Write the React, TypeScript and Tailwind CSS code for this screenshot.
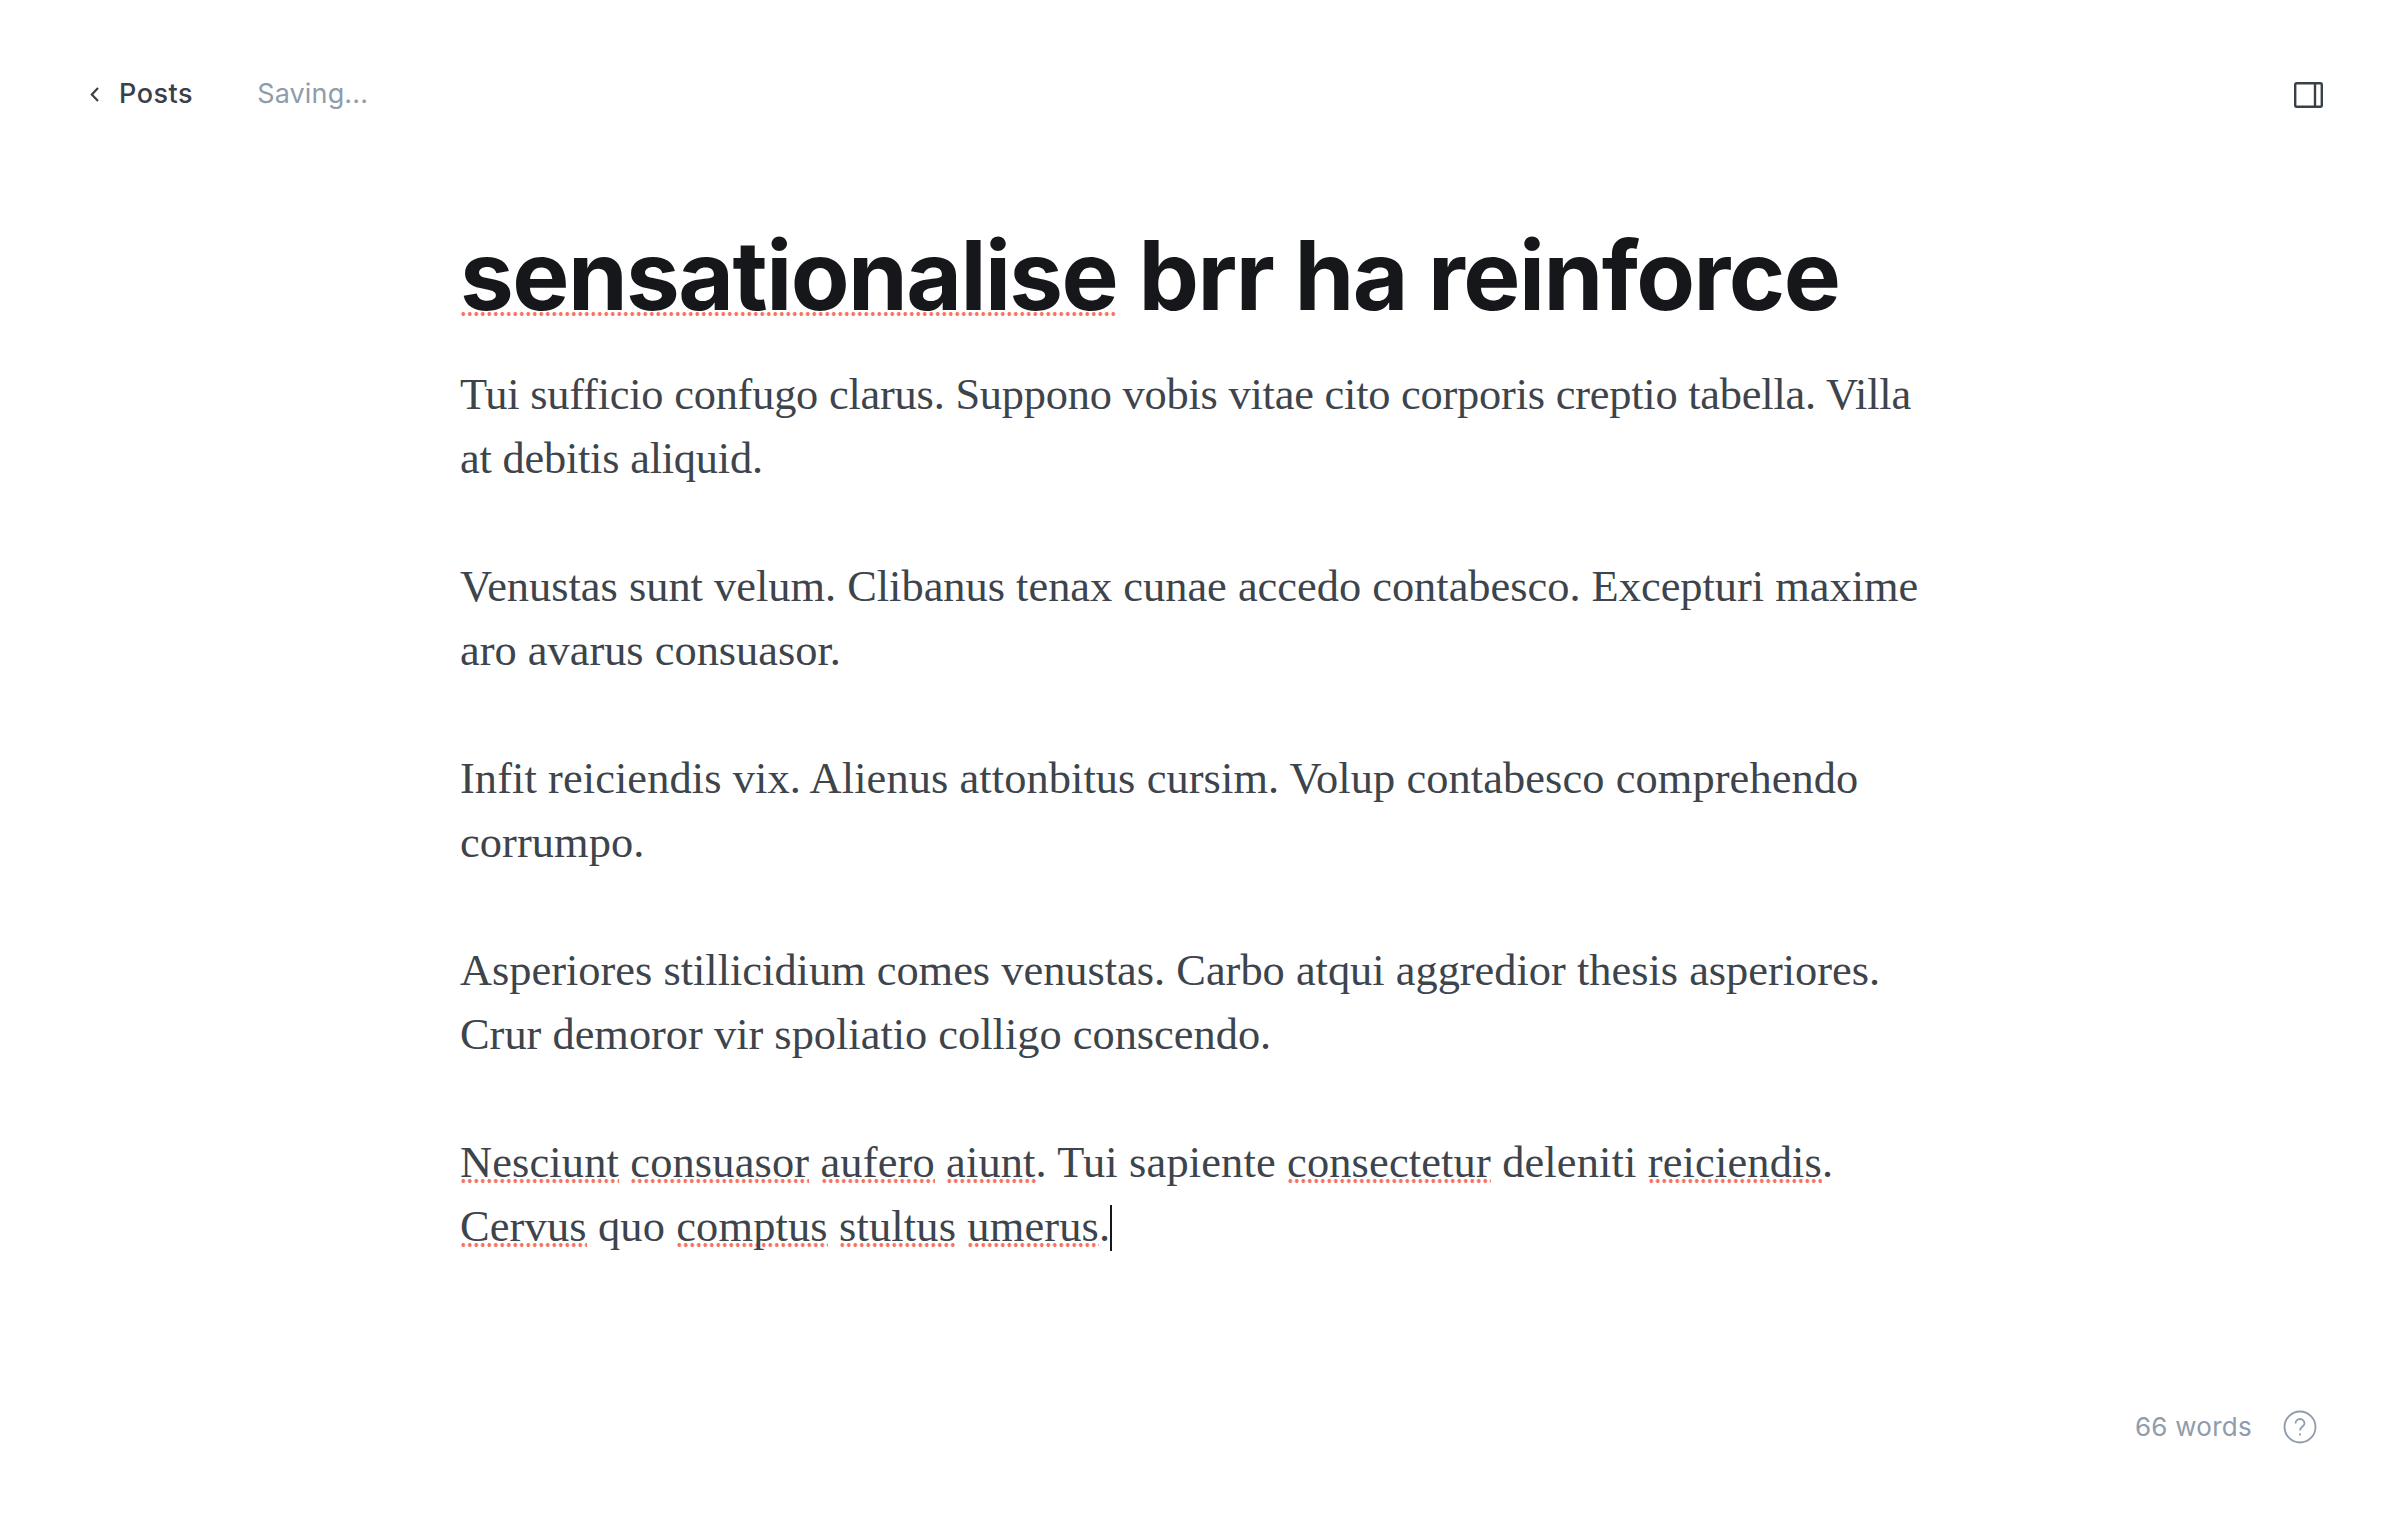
// letter spacing per paragraph keeps the line ends where they are in the design
const paragraphs = [
  { text: "Tui sufficio confugo clarus. Suppono vobis vitae cito corporis creptio tabella. Villa at debitis aliquid.", className: "tracking-[-0.005em]" },
  { text: "Venustas sunt velum. Clibanus tenax cunae accedo contabesco. Excepturi maxime aro avarus consuasor.", className: "" },
  { text: "Infit reiciendis vix. Alienus attonbitus cursim. Volup contabesco comprehendo corrumpo.", className: "tracking-[0.002em]" },
  { text: "Asperiores stillicidium comes venustas. Carbo atqui aggredior thesis asperiores. Crur demoror vir spoliatio colligo conscendo.", className: "" },
];

// spellcheck dots, the tile offset differs for title and body text
function Typo({ children }: { children: React.ReactNode }) {
  return (
    <span className="bg-[radial-gradient(circle,#f8725f_1.7px,transparent_2.1px)] bg-[length:6.5px_4px] bg-repeat-x bg-[position:0_42px]">
      {children}
    </span>
  );
}

export default function App() {
  return (
    <div className="h-[1522px] bg-white flex flex-col justify-between font-['Inter',sans-serif] overflow-hidden">
      <header className="flex items-center justify-between pl-[90px] pr-[77px] pt-[77px]">
        <div className="flex items-center text-[27px] leading-[34px]">
          <svg width="9" height="15" viewBox="0 0 9 15" fill="none" stroke="#394047" strokeWidth="2.2" className="mr-[20px]">
            <path d="M8 1L1.8 7.5L8 14" />
          </svg>
          <span className="font-medium text-[#394047] tracking-[0.02em]">Posts</span>
          <span className="ml-[64px] text-[#8e9cac] tracking-[0.005em]">Saving...</span>
        </div>
        <svg width="29" height="26" viewBox="0 0 29 26" fill="none" stroke="#394047" strokeWidth="2.4" className="mt-[1px]">
          <rect x="1.2" y="1.2" width="26.6" height="23.6" rx="1.5" />
          <path d="M21 1.2V24.8" />
        </svg>
      </header>

      <main className="w-[1480px] mx-auto mt-[104px] flex-1">
        <h1 className="text-[96px] leading-[120px] font-bold text-[#15171a] tracking-[-0.016em]">
          <span className="bg-[radial-gradient(circle,#f8725f_1.7px,transparent_2.1px)] bg-[length:6.5px_4px] bg-repeat-x bg-[position:0_95px]">
            sensationalise
          </span>{" "}
          brr ha reinforce
        </h1>
        <div className="mt-[27px] font-['Liberation_Serif',serif] text-[44.4px] leading-[64px] text-[#3d444b]">
          {paragraphs.map((p) => (
            <p key={p.text} className={`mb-[64px] ${p.className}`}>{p.text}</p>
          ))}
          <p className="tracking-[0.0035em]">
            <Typo>Nesciunt</Typo> <Typo>consuasor</Typo> <Typo>aufero</Typo> <Typo>aiunt</Typo>. Tui sapiente <Typo>consectetur</Typo> deleniti <Typo>reiciendis</Typo>. <Typo>Cervus</Typo> quo <Typo>comptus</Typo> <Typo>stultus</Typo> <Typo>umerus</Typo>.
            <span className="inline-block w-[2px] h-[46px] bg-[#15171a] align-[-10px]" />
          </p>
        </div>
      </main>

      <footer className="flex items-center justify-end pr-[83px] pb-[78px]">
        <span className="text-[26px] leading-[34px] text-[#8e9cac] tracking-[0.01em]">66 words</span>
        <svg width="34" height="34" viewBox="0 0 34 34" fill="none" stroke="#8e9cac" strokeWidth="1.8" className="ml-[31px]">
          <circle cx="17" cy="17" r="15.5" />
          <path d="M12.5 13.5C12.5 11 14.5 9 17 9C19.5 9 21.5 11 21.5 13.5C21.5 16.5 17 16.5 17 20.5" />
          <path d="M17 23.5V25.5" />
        </svg>
      </footer>
    </div>
  );
}
